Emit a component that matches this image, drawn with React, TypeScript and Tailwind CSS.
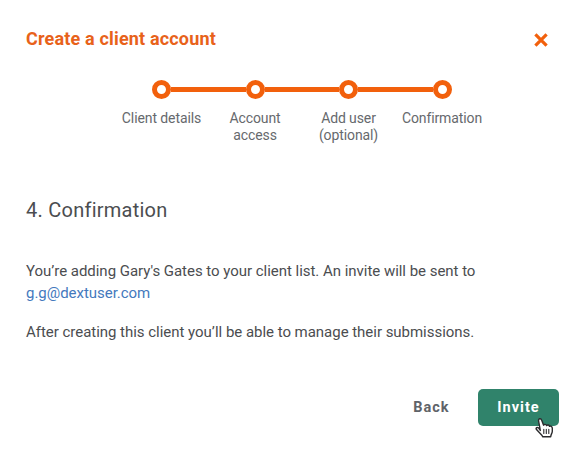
import React from 'react';

interface Step {
  id: string;
  lines: string[];
}

const steps: Step[] = [
  { id: 'details', lines: ['Client details'] },
  { id: 'access', lines: ['Account', 'access'] },
  { id: 'user', lines: ['Add user', '(optional)'] },
  { id: 'confirmation', lines: ['Confirmation'] },
];

const CloseIcon: React.FC = () => (
  <svg className="w-3.5 h-3.5" viewBox="0 0 14 14" fill="none" stroke="#f2600c" strokeWidth="3.2">
    <path d="M1.4 1.4 12.6 12.6M12.6 1.4 1.4 12.6" />
  </svg>
);

const HandCursor: React.FC = () => (
  <svg
    className="absolute left-[57px] top-[28px] w-[19px] h-[22px] pointer-events-none"
    viewBox="0 0 19 22"
    fill="#fff"
    stroke="#2b2b2d"
    strokeWidth="1.4"
    strokeLinejoin="round"
    strokeLinecap="round"
  >
    <path d="M5.3 13.4 3.6 4C3.2 1.4 5.9.9 6.6 3L8.6 8.2C9 7 11.2 7 11.6 8.6 12.4 7.6 14.2 7.9 14.5 9.3 15.6 8.7 17.2 9.3 17.3 11V14.2C17.3 16.2 16 17 15.7 19.8H7.8C7.3 17.7 4.5 16.2 1.3 12.3.6 10.8 2.2 9.8 3.7 11Z" />
    <path strokeWidth="1.1" d="M8.8 12.2V16.4M11.3 12.2V16.4M13.8 12.2V16.4" />
  </svg>
);

/** Horizontal progress line with a label under each step */
const Stepper: React.FC = () => (
  <ol className="ml-[114.75px] flex w-[374px]">
    {steps.map((step, idx) => (
      <li key={step.id} className="flex w-[93.5px] flex-col items-center">
        <div className="flex w-full items-center">
          <span className={`h-[5px] flex-1 ${idx > 0 ? 'bg-[#f2600c]' : ''}`} />
          <span className="h-[19px] w-[19px] rounded-full border-[5px] border-[#f2600c] bg-white" />
          <span className={`h-[5px] flex-1 ${idx < steps.length - 1 ? 'bg-[#f2600c]' : ''}`} />
        </div>
        <div className="mt-[11px] whitespace-nowrap text-center text-[14px] leading-[17px] tracking-[-0.1px] text-[#66696d]">
          {step.lines.map((line) => (
            <div key={line}>{line}</div>
          ))}
        </div>
      </li>
    ))}
  </ol>
);

const App: React.FC = () => {
  return (
    <div className="flex h-[450px] w-[585px] flex-col overflow-hidden bg-white font-[Roboto,sans-serif] text-[#4b4d50]">
      <header className="flex h-20 items-start justify-between pl-[26px] pr-[37px]">
        <h1 className="mt-[27px] text-[18px] font-bold leading-6 tracking-[0.17px] text-[#e8621a]">
          Create a client account
        </h1>
        <button type="button" aria-label="Close" className="mt-[33px]">
          <CloseIcon />
        </button>
      </header>

      <div className="h-[116px]">
        <Stepper />
      </div>

      <main className="px-[26px]">
        <h2 className="text-[20px] leading-7 tracking-[0.25px]">4. Confirmation</h2>
        <p className="mt-9 whitespace-nowrap text-[15px] leading-[22px] tracking-[-0.03px]">
          You’re adding Gary's Gates to your client list. An invite will be sent to
          <br />
          <a href="#" className="text-[#4479bd]">g.g@dextuser.com</a>
        </p>
        <p className="mt-[17px] whitespace-nowrap text-[15px] leading-[22px] tracking-[-0.03px]">
          After creating this client you’ll be able to manage their submissions.
        </p>
      </main>

      <footer className="mt-[46px] flex justify-end pr-[26px]">
        <button type="button" className="mr-[28.5px] text-[14.5px] font-bold tracking-[1px] text-[#606368]">
          Back
        </button>
        <button
          type="button"
          className="relative h-[37px] w-[81px] rounded-[5px] bg-[#30836b] text-[14.5px] font-bold tracking-[1px] text-white"
        >
          Invite
          <HandCursor />
        </button>
      </footer>
    </div>
  );
};

export default App;
